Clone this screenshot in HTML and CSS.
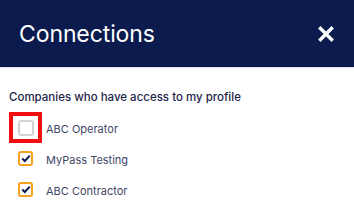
FILE: index.html
```html
<!DOCTYPE html>
<html>
<head>
<meta charset="utf-8">
<link rel="stylesheet" href="styles.css">
</head>
<body>
<header class="header">
  <h1 class="title">Connections</h1>
  <button class="close" aria-label="Close">
    <svg width="16" height="16" viewBox="0 0 16 16"><path d="M2.5 2.5 L13.5 13.5 M13.5 2.5 L2.5 13.5" stroke="#fff" stroke-width="3.4" stroke-linecap="square"/></svg>
  </button>
</header>
<main class="content">
  <p class="heading">Companies who have access to my profile</p>
  <ul class="list">
    <li class="row">
      <span class="slot slot-marked"><span class="cb"></span></span>
      <span class="label">ABC Operator</span>
    </li>
    <li class="row">
      <span class="slot"><span class="cb cb-checked"><svg width="10" height="9" viewBox="0 0 10 9"><path d="M1.2 4.6 L3.8 7 L8.8 1.6" fill="none" stroke="#0b1b4d" stroke-width="2"/></svg></span></span>
      <span class="label">MyPass Testing</span>
    </li>
    <li class="row">
      <span class="slot"><span class="cb cb-checked"><svg width="10" height="9" viewBox="0 0 10 9"><path d="M1.2 4.6 L3.8 7 L8.8 1.6" fill="none" stroke="#0b1b4d" stroke-width="2"/></svg></span></span>
      <span class="label">ABC Contractor</span>
    </li>
  </ul>
</main>
</body>
</html>
```
FILE: styles.css
```css
* { box-sizing: border-box; }
html, body { margin: 0; padding: 0; background: #fff; }
body { font-family: Inter, "Noto Sans", sans-serif; width: 354px; height: 215px; overflow: hidden; }
.header {
  height: 68px;
  background: #0b1b4d;
  border-bottom: 1px solid #e2e4ea;
  display: flex;
  align-items: center;
  justify-content: space-between;
  padding: 0 20px 0 19px;
}
.title {
  margin: 0;
  color: #fff;
  font-size: 23px;
  font-weight: 400;
  letter-spacing: -0.1px;
  line-height: 28px;
}
.close {
  background: none;
  border: 0;
  padding: 0;
  width: 16px;
  height: 16px;
  display: flex;
}
.content { padding: 21px 0 0 9px; }
.heading {
  margin: 0 0 7px;
  font-size: 11.5px;
  font-weight: 500;
  color: #1c2548;
  line-height: 16px;
}
.list { list-style: none; margin: 0; padding: 0; }
.row { display: flex; align-items: center; height: 31px; gap: 4px; }
.slot {
  width: 33px;
  height: 31px;
  display: flex;
  align-items: center;
  justify-content: center;
}
.slot-marked { border: 4px solid #f20f0f; }
.cb {
  width: 16px;
  height: 16px;
  border: 2px solid #d3d3d6;
  border-radius: 3px;
  background: #fff;
  display: flex;
  align-items: center;
  justify-content: center;
}
.cb-checked { border-color: #f7a21c; width: 15px; height: 15px; }
.label { font-size: 11px; color: #3f4766; padding-top: 2px; }
```
